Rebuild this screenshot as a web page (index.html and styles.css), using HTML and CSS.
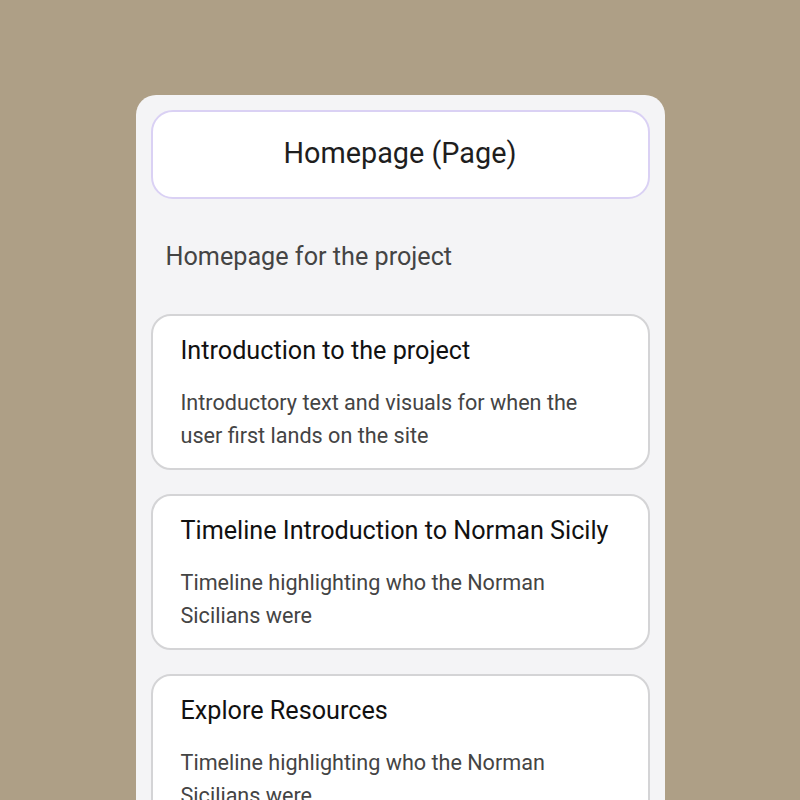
FILE: index.html
```html
<!DOCTYPE html>
<html>
<head>
<meta charset="utf-8">
<link rel="stylesheet" href="styles.css">
</head>
<body>
<div class="panel">
  <div class="header">Homepage (Page)</div>
  <p class="subtitle">Homepage for the project</p>
  <div class="cards">
    <div class="card">
      <div class="card-title">Introduction to the project</div>
      <div class="card-desc">Introductory text and visuals for when the user first lands on the site</div>
    </div>
    <div class="card">
      <div class="card-title">Timeline Introduction to Norman Sicily</div>
      <div class="card-desc">Timeline highlighting who the Norman Sicilians were</div>
    </div>
    <div class="card">
      <div class="card-title">Explore Resources</div>
      <div class="card-desc">Timeline highlighting who the Norman Sicilians were</div>
    </div>
  </div>
</div>
</body>
</html>
```
FILE: styles.css
```css
html, body {
  margin: 0;
  padding: 0;
  height: 100%;
  overflow: hidden;
}
body {
  background: #ae9f86;
  font-family: Roboto, "Noto Sans", sans-serif;
}
.panel {
  width: 529px;
  box-sizing: border-box;
  margin: 95px auto 0;
  background: #f4f4f6;
  border-radius: 20px;
  padding: 15px 15px 40px;
  min-height: 800px;
}
.header {
  box-sizing: border-box;
  height: 89px;
  padding-bottom: 3px;
  background: #fff;
  border: 2px solid #dad1f4;
  border-radius: 22px;
  display: flex;
  align-items: center;
  justify-content: center;
  font-size: 28.8px;
  color: #1e1e1e;
}
.subtitle {
  margin: 0;
  padding: 41px 15px 41px;
  font-size: 25.2px;
  line-height: 33px;
  color: #444;
}
.cards {
  display: flex;
  flex-direction: column;
  gap: 24px;
}
.card {
  box-sizing: border-box;
  height: 156px;
  background: #fff;
  border: 2px solid #d4d4d6;
  border-radius: 20px;
  padding: 20px 28px;
}
.card-title {
  font-size: 25.2px;
  line-height: 30px;
  color: #111;
}
.card-desc {
  margin-top: 20px;
  font-size: 21.6px;
  line-height: 33px;
  color: #444;
}
```
